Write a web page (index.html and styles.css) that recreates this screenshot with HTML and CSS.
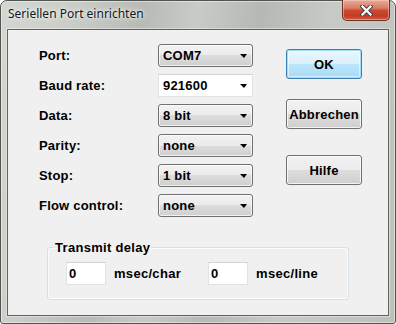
FILE: index.html
```html
<!DOCTYPE html>
<html lang="de">
<head>
    <meta charset="UTF-8">
    <meta name="viewport" content="width=device-width, initial-scale=1.0">
    <title>Seriellen Port einrichten</title>
    <link rel="stylesheet" href="styles.css">
</head>
<body>
    <div class="window">
        <div class="titlebar">
            <span class="title">Seriellen Port einrichten</span>
            <button class="close" type="button">
                <svg width="13" height="11" viewBox="0 0 13 11">
                    <path d="M2.5 1.5 L10.5 9.5 M10.5 1.5 L2.5 9.5" stroke="#40444a" stroke-width="4.2" stroke-linecap="square" fill="none"/>
                    <path d="M2.5 1.5 L10.5 9.5 M10.5 1.5 L2.5 9.5" stroke="#fff" stroke-width="2.2" stroke-linecap="square" fill="none"/>
                </svg>
            </button>
        </div>

        <div class="client">
            <div class="main">
                <div class="fields">
                    <label>Port:</label>
                    <div class="combo"><span>COM7</span><i class="arrow"></i></div>

                    <label>Baud rate:</label>
                    <div class="combo edit"><span>921600</span><i class="arrow"></i></div>

                    <label>Data:</label>
                    <div class="combo"><span>8 bit</span><i class="arrow"></i></div>

                    <label>Parity:</label>
                    <div class="combo"><span>none</span><i class="arrow"></i></div>

                    <label>Stop:</label>
                    <div class="combo"><span>1 bit</span><i class="arrow"></i></div>

                    <label>Flow control:</label>
                    <div class="combo"><span>none</span><i class="arrow"></i></div>
                </div>

                <div class="buttons">
                    <button class="btn default" type="button">OK</button>
                    <button class="btn cancel" type="button">Abbrechen</button>
                    <button class="btn help" type="button">Hilfe</button>
                </div>
            </div>

            <fieldset class="group">
                <legend>Transmit delay</legend>
                <div class="delay-row">
                    <input class="num" type="text" value="0">
                    <span class="unit">msec/char</span>
                    <input class="num second" type="text" value="0">
                    <span class="unit">msec/line</span>
                </div>
            </fieldset>
        </div>
    </div>
</body>
</html>
```

FILE: styles.css
```css
body {
    margin: 0;
    padding: 0;
    background-color: #fff;
    font-family: "Liberation Sans", Arial, sans-serif;
}
.window {
    width: 396px;
    height: 324px;
    box-sizing: border-box;
    border: 1px solid #50554f;
    border-radius: 7px 7px 3px 3px;
    padding: 0 6px 7px 6px;
    display: flex;
    flex-direction: column;
    background: linear-gradient(100deg, #d4d6d2 0%, #cbcec9 15%, #b8bbb5 32%, #c9cbc6 44%, #b6b9b3 58%, #c8cac5 74%, #bec1bb 100%);
    box-shadow: inset 0 0 0 1px rgba(255, 255, 255, 0.45);
}
.titlebar {
    height: 28px;
    display: flex;
    align-items: flex-start;
    justify-content: space-between;
}
.title {
    font-family: "Noto Sans", sans-serif;
    font-size: 12px;
    line-height: 16px;
    padding: 5px 0 0 1px;
    color: #101820;
    text-shadow: 0 0 6px rgba(255, 255, 255, 0.9), 0 0 3px rgba(255, 255, 255, 0.9);
}
.close {
    width: 48px;
    height: 21px;
    margin: -1px -1px 0 0;
    padding: 0;
    border: 1px solid #6b3125;
    border-top: none;
    border-radius: 0 0 5px 5px;
    background: linear-gradient(#e9aa99 0%, #dc7d66 40%, #c94a30 52%, #c23c24 80%, #d25d43 100%);
    box-shadow: inset 0 0 0 1px rgba(255, 220, 210, 0.45);
    display: flex;
    align-items: center;
    justify-content: center;
}
.close svg {
    display: block;
}
.client {
    flex: 1;
    background-color: #f0f0f0;
    border: 1px solid #5e635d;
    box-shadow: 0 0 0 1px rgba(255, 255, 255, 0.4);
    font-size: 13px;
    font-weight: bold;
    color: #000;
}
.main {
    display: flex;
    padding: 14px 0 0 31px;
}
.fields {
    display: grid;
    grid-template-columns: 119px 95px;
    grid-auto-rows: 23px;
    row-gap: 7px;
    align-items: center;
}
label {
    letter-spacing: 0.2px;
}
.combo {
    height: 23px;
    box-sizing: border-box;
    border: 1px solid #707070;
    border-radius: 3px;
    padding: 0 3px 0 4px;
    display: flex;
    align-items: center;
    justify-content: space-between;
    background: linear-gradient(#f2f2f2 0%, #ebebeb 50%, #dddddd 50%, #cfcfcf 100%);
    box-shadow: inset 0 0 0 1px rgba(255, 255, 255, 0.7);
    letter-spacing: 0.2px;
}
.combo.edit {
    background: #fff;
    border-color: #e2e2e2;
    border-top-color: #d2d2d2;
    border-radius: 0;
    box-shadow: none;
}
.arrow {
    width: 0;
    height: 0;
    border-left: 4px solid transparent;
    border-right: 3px solid transparent;
    border-top: 4px solid #000;
    margin-right: 2px;
}
.buttons {
    display: flex;
    flex-direction: column;
    margin-left: 33px;
    padding-top: 5px;
}
.btn {
    width: 76px;
    height: 30px;
    box-sizing: border-box;
    border: 1px solid #707070;
    border-radius: 3px;
    padding: 0;
    font-family: "Liberation Sans", Arial, sans-serif;
    font-size: 13px;
    font-weight: bold;
    letter-spacing: 0.2px;
    color: #000;
    background: linear-gradient(#f2f2f2 0%, #ebebeb 50%, #dddddd 50%, #cfcfcf 100%);
    box-shadow: inset 0 0 0 1px rgba(255, 255, 255, 0.75);
}
.btn.default {
    border-color: #3c7fb1;
    background: linear-gradient(#eaf6fd 0%, #d9f0fc 50%, #bee6fd 50%, #a7d9f5 100%);
    box-shadow: inset 0 0 0 1px #9edcf7, inset 0 0 0 2px rgba(255, 255, 255, 0.5);
}
.btn.cancel {
    margin-top: 20px;
}
.btn.help {
    margin-top: 26px;
}
.group {
    width: 302px;
    box-sizing: border-box;
    margin: 23px 0 0 39px;
    padding: 0;
    border: 1px solid #d5dfe5;
    border-radius: 3px;
    box-shadow: inset 0 0 0 1px rgba(255, 255, 255, 0.8);
}
.group legend {
    margin-left: 6px;
    padding: 0 1px;
    line-height: 15px;
    letter-spacing: 0.3px;
}
.delay-row {
    display: flex;
    align-items: center;
    padding: 7px 0 14px 18px;
}
.num {
    width: 40px;
    height: 23px;
    box-sizing: border-box;
    margin: 0;
    padding: 0 0 0 2px;
    border: 1px solid #e2e2e2;
    border-top-color: #d2d2d2;
    background: #fff;
    font-family: "Liberation Sans", Arial, sans-serif;
    font-size: 13px;
    font-weight: bold;
    color: #000;
}
.num.second {
    margin-left: 27px;
}
.unit {
    margin-left: 8px;
    letter-spacing: 0.3px;
}
```
